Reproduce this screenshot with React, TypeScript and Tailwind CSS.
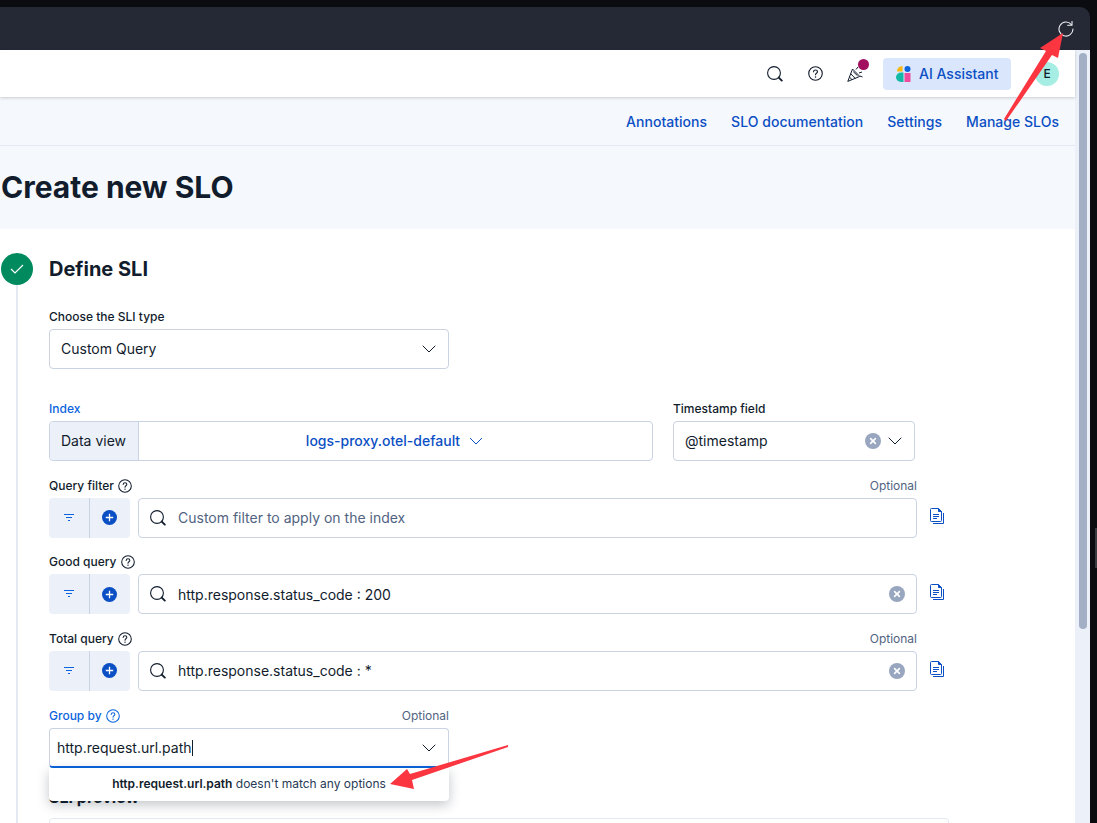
const INTER = "font-['Inter',sans-serif]";

function MagnifyIcon({ className }: { className?: string }) {
  return (
    <svg className={className} viewBox="0 0 16 16" fill="none" stroke="#111c2c" strokeWidth="1.1">
      <circle cx="7" cy="7" r="6.4" />
      <path d="M11.8 11.6 14.8 14.6" strokeWidth="1.9" strokeLinecap="round" />
    </svg>
  );
}

function HelpIcon({ className, color = "#111c2c" }: { className?: string; color?: string }) {
  return (
    <svg className={className} viewBox="0 0 16 16" fill="none" stroke={color} strokeWidth="1.2">
      <circle cx="8" cy="8" r="7.2" />
      <path d="M5.9 6.2C6 4.9 6.9 4.2 8 4.2c1.2 0 2.1.8 2.1 1.9 0 1.6-2.1 1.6-2.1 3.2" strokeLinecap="round" />
      <circle cx="8" cy="11.6" r=".8" fill={color} stroke="none" />
    </svg>
  );
}

function Chevron() {
  return (
    <svg className="w-[14px] h-[8px]" viewBox="0 0 14 8" fill="none" stroke="#111c2c" strokeWidth="1">
      <path d="M1 1l6 6 6-6" strokeLinecap="round" strokeLinejoin="round" />
    </svg>
  );
}

function ClearIcon() {
  return (
    <svg className="w-4 h-4" viewBox="0 0 16 16">
      <circle cx="8" cy="8" r="8" fill="#98a6bf" />
      <path d="M5.6 5.6l4.8 4.8M10.4 5.6l-4.8 4.8" stroke="white" strokeWidth="1.6" strokeLinecap="round" />
    </svg>
  );
}

function DocsIcon() {
  return (
    <svg className="w-[15px] h-4" viewBox="0 0 15 16" fill="none" stroke="#0b4fc4" strokeWidth="1">
      <path d="M8.5.5H1.5a1 1 0 0 0-1 1v11a1 1 0 0 0 1 1h9a1 1 0 0 0 1-1V3.5z" />
      <path d="M8.5.5v3h3z" fill="#0b4fc4" />
      <path d="M3 6.5h6M3 8.5h6M3 10.5h4" />
      <path d="M13.5 5v10.5H3" />
    </svg>
  );
}

function FilterButtons() {
  return (
    <div className="w-[81px] h-10 shrink-0 flex bg-[#ecf1f9] rounded-[4px]">
      <div className="w-[41px] flex items-center justify-center border-r border-[#cad3e2]">
        <svg className="w-3 h-2.5" viewBox="0 0 12 10" stroke="#0b64dd" strokeWidth="1" fill="none">
          <path d="M1 1.5h10M3 4.5h6M5 7.5h2" />
        </svg>
      </div>
      <div className="flex-1 flex items-center justify-center pr-[1px]">
        <svg className="w-[15px] h-[15px]" viewBox="0 0 15 15">
          <circle cx="7.5" cy="7.5" r="7.5" fill="#0b4fc4" />
          <path d="M7.5 3.8v7.4M3.8 7.5h7.4" stroke="white" strokeWidth="1.3" />
        </svg>
      </div>
    </div>
  );
}

function QueryRow({
  label,
  value,
  placeholder,
  optional,
}: {
  label: string;
  value?: string;
  placeholder?: string;
  optional?: boolean;
}) {
  return (
    <div className="w-[868px] mb-[15.67px]">
      <div className="h-[18px] mb-[3px] flex items-center justify-between text-xs">
        <div className="flex items-center gap-[4px] font-medium text-[#111c2c]">
          {label}
          <HelpIcon className="w-[14px] h-[14px]" />
        </div>
        {optional && <span className="text-[#516381]">Optional</span>}
      </div>
      <div className="flex items-center relative">
        <FilterButtons />
        <div className="ml-2 w-[779px] h-10 flex items-center rounded-[4px] border border-[#cad3e2] bg-white pl-[11px] pr-[11px]">
          <MagnifyIcon className="w-4 h-4 mr-[12px] shrink-0" />
          <span className={`text-sm flex-1 pt-[1px] ${value ? "text-[#111c2c]" : "text-[#516381]"}`}>
            {value ?? placeholder}
          </span>
          {value && <ClearIcon />}
        </div>
        <div className="absolute left-[881px] top-[10px]">
          <DocsIcon />
        </div>
      </div>
    </div>
  );
}

export default function App() {
  return (
    <div className={`relative w-[1097px] h-[823px] overflow-hidden bg-[#0b0c10] pt-[7px] pr-[7px] ${INTER}`}>
      <div className="h-[816px] flex flex-col overflow-hidden rounded-tr-[10px]">
        {/* browser toolbar */}
        <div className="h-[43px] shrink-0 bg-[#252936] flex items-center justify-end pr-[16px]">
          <svg className="w-4 h-4 mb-[-1px]" viewBox="0 0 16 16" fill="none" stroke="#eceef1" strokeWidth="1.1">
            <path d="M13.4 3.6A7 7 0 1 0 15 8" strokeLinecap="round" />
            <path d="M9.6 4.2h4.4V.4" strokeLinecap="round" strokeLinejoin="round" />
          </svg>
        </div>

        <div className="flex-1 flex min-h-0">
          <div className="flex-1 min-w-0 bg-white">
            {/* kibana header */}
            <div className="h-[47px] bg-white flex items-center justify-end shadow-[0_1px_3px_rgba(17,28,44,0.2)] relative pr-[16px]">
              <MagnifyIcon className="w-4 h-4 mr-[25px]" />
              <HelpIcon className="w-[15px] h-[15px] mr-[24px]" />
              <div className="relative w-4 h-4 mr-[20px]">
                <svg className="w-4 h-4" viewBox="0 0 16 16" fill="none" stroke="#111c2c" strokeWidth="1">
                  <path d="M5.5 3 .8 15.4l12-5z" strokeLinejoin="round" />
                  <path d="M3.6 7.6l4.6 4.8M2.4 11l2.6 2.6M6.2 5.6l4.4 4.2" />
                  <path d="M9 3.5l2-2.5M12 7l3-1M13 10l2.5 1" />
                </svg>
                <span className="absolute left-[11px] top-[-7px] w-[11px] h-[11px] rounded-full bg-[#a30f5f]" />
              </div>
              <div className="w-[128px] h-8 rounded-[4px] bg-[#d9e6fb] flex items-center pl-[13px] mr-[24px]">
                <svg className="w-[15px] h-[16px] mr-[8px]" viewBox="0 0 15 16">
                  <path d="M6.5 0v5.5H1A5.5 5.5 0 0 1 6.5 0z" fill="#f6b80e" />
                  <path d="M7.5 6.5V16H5A5 4.75 0 0 1 5 6.5z" fill="#14b8a6" />
                  <circle cx="11.5" cy="3" r="3" fill="#0b64dd" />
                  <rect x="8.5" y="7" width="6" height="9" fill="#ee4c9c" />
                </svg>
                <span className="text-sm font-medium text-[#0b4fc4]">AI Assistant</span>
              </div>
              <div className="w-6 h-6 rounded-full bg-[#a6ede3] flex items-center justify-center text-xs font-medium text-[#111c2c]">
                E
              </div>
            </div>

            {/* page header */}
            <div className="bg-[#f5f8fc]">
              <div className="h-[49px] flex items-center justify-end gap-6 pt-[2px] pr-[16px] border-b border-[#e3e8f2] text-sm font-medium tracking-[0.03px] text-[#0b4fc4]">
                <span>Annotations</span>
                <span>SLO documentation</span>
                <span>Settings</span>
                <span>Manage SLOs</span>
              </div>
              <div className="h-[83px] flex items-center pl-[1px]">
                <h1 className="text-[30px] font-bold text-[#111c2c]">Create new SLO</h1>
              </div>
            </div>

            {/* step */}
            <div className="relative pl-[49px] pt-[24px]">
              <div className="absolute left-[16px] top-[40px] bottom-0 w-[2px] bg-[#e3e8f2]" />
              <div className="absolute left-[1px] top-[24px] w-8 h-8 rounded-full bg-[#008a5e] flex items-center justify-center">
                <svg className="w-[14px] h-[10px]" viewBox="0 0 14 10" fill="none" stroke="white" strokeWidth="1.2">
                  <path d="M1 5l4 4 8-8" />
                </svg>
              </div>
              <h2 className="h-8 leading-8 text-xl font-bold text-[#111c2c] mb-[23px]">Define SLI</h2>

              <div className="w-[400px] mb-[31px]">
                <div className="h-[18px] mb-[3px] text-xs font-medium text-[#111c2c] leading-[18px]">Choose the SLI type</div>
                <div className="h-10 rounded-[4px] border border-[#cad3e2] flex items-center justify-between pl-[11px] pr-[12px] text-sm text-[#111c2c]">
                  Custom Query
                  <Chevron />
                </div>
              </div>

              {/* index + timestamp */}
              <div className="flex gap-[20px] mb-[15.67px]">
                <div className="w-[604px]">
                  <div className="h-[18px] mb-[3px] text-xs font-medium text-[#0b64dd] leading-[18px]">Index</div>
                  <div className="h-10 rounded-[4px] border border-[#cad3e2] flex text-sm">
                    <div className="w-[89px] bg-[#ecf1f9] border-r border-[#cad3e2] flex items-center pl-[11px] text-[#111c2c] rounded-l-[4px]">
                      Data view
                    </div>
                    <div className="flex-1 flex items-center justify-center gap-[9px] pr-[2px] font-medium text-[#0b4fc4]">
                      logs-proxy.otel-default
                      <svg className="w-[14px] h-[8px]" viewBox="0 0 14 8" fill="none" stroke="#0b4fc4" strokeWidth="1">
                        <path d="M1 1l6 6 6-6" />
                      </svg>
                    </div>
                  </div>
                </div>
                <div className="w-[242px]">
                  <div className="h-[18px] mb-[3px] text-xs font-medium text-[#111c2c] leading-[18px]">Timestamp field</div>
                  <div className="h-10 rounded-[4px] border border-[#cad3e2] flex items-center pl-[11px] pr-[12px] text-sm text-[#111c2c]">
                    <span className="flex-1">@timestamp</span>
                    <ClearIcon />
                    <div className="w-[7px]" />
                    <Chevron />
                  </div>
                </div>
              </div>

              <QueryRow label="Query filter" placeholder="Custom filter to apply on the index" optional />
              <QueryRow label="Good query" value="http.response.status_code : 200" />
              <QueryRow label="Total query" value="http.response.status_code : *" optional />

              {/* group by */}
              <div className="w-[400px] relative">
                <div className="h-[18px] mb-[3px] flex items-center justify-between text-xs">
                  <div className="flex items-center gap-[4px] font-medium text-[#0b64dd]">
                    Group by
                    <HelpIcon className="w-[14px] h-[14px]" color="#0b64dd" />
                  </div>
                  <span className="text-[#516381]">Optional</span>
                </div>
                <div className="h-10 rounded-[4px] border border-[#cad3e2] border-b-2 border-b-[#0b64dd] flex items-center justify-between pl-[7px] pr-[12px] pt-[1px] text-sm text-[#111c2c]">
                  <span className="flex items-center">
                    http.request.url.path
                    <span className="w-px h-4 bg-[#111c2c]" />
                  </span>
                  <Chevron />
                </div>
                <div className="mt-[17px] text-base font-bold text-[#111c2c]">SLI preview</div>
                <div className="absolute left-0 right-0 top-[61px] h-[33px] bg-white rounded-b-[4px] shadow-[0_4px_12px_rgba(17,28,44,0.25)] flex items-center justify-center text-xs text-[#283a55]">
                  <span><b className="font-semibold text-[#111c2c]">http.request.url.path</b> doesn't match any options</span>
                </div>
              </div>
              <div className="w-[900px] h-10 mt-[9px] rounded-[4px] border border-[#e3e8f2]" />
            </div>
          </div>

          {/* scrollbar */}
          <div className="w-[15px] shrink-0 bg-[#ecf1f9] pl-[4px] pt-[3px]">
            <div className="w-2 h-[576px] rounded-full bg-[#a2afc4]" />
          </div>
        </div>
      </div>

      {/* sliver of the next window at the right edge */}
      <div className="absolute left-[1095px] top-[528px] w-[2px] h-10 bg-[#3a3b40]" />

      {/* annotation arrows from the screenshot */}
      <svg className="absolute left-0 top-0 pointer-events-none" width="1097" height="823">
        <path d="M1004 119 1046 51 1040 48 1063 33 1058 58 1052 55 1006 121z" fill="#fb3640" />
        <path d="M508 745 410 774 407 769 390 784 414 789 412 780 508 747z" fill="#fb3640" />
      </svg>
    </div>
  );
}
